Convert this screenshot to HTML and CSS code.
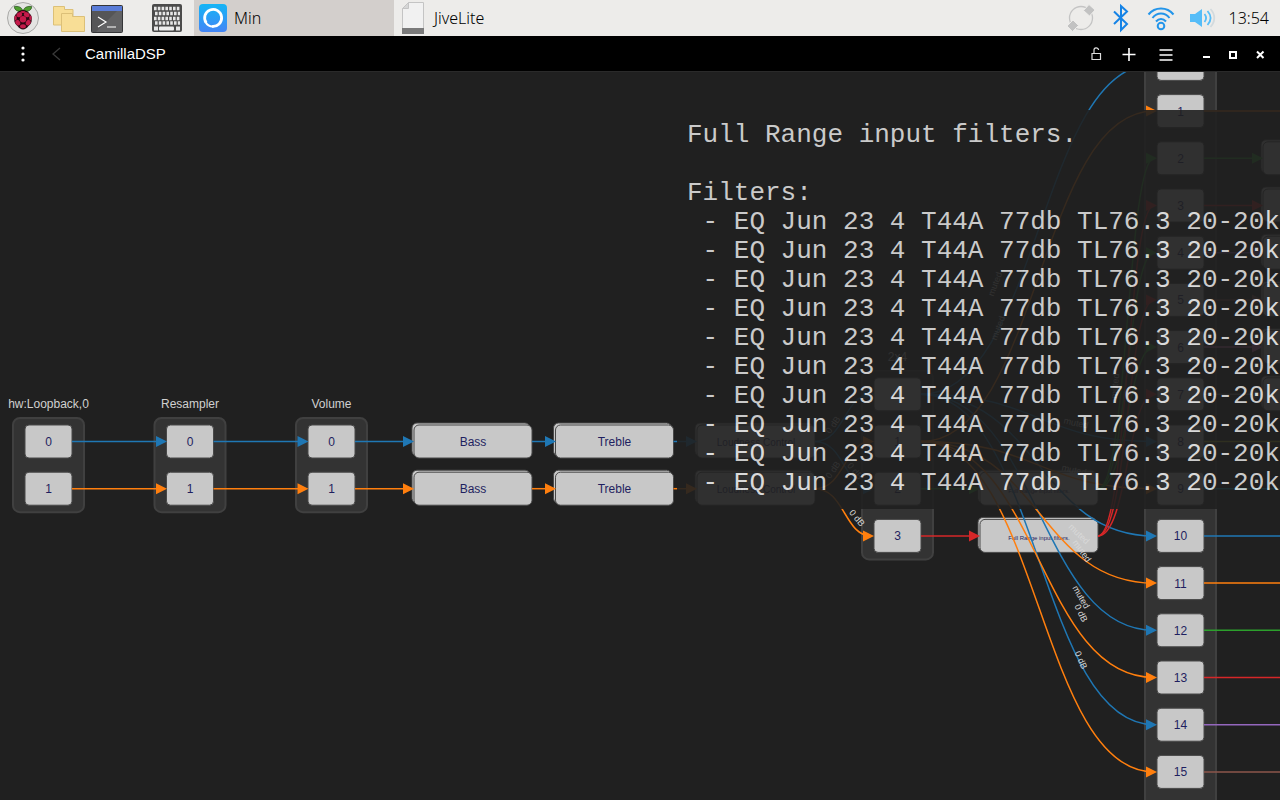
FILE: index.html
```html
<!DOCTYPE html>
<html lang="en">
<head>
<meta charset="utf-8">
<title>CamillaDSP</title>
<link rel="stylesheet" href="styles.css">
</head>
<body>
<header class="panel">
  <button class="launch launch-menu" aria-label="Menu">
    <svg width="34" height="34" viewBox="0 0 34 34">
      <circle cx="17" cy="17" r="15.5" fill="#e4e4e2" stroke="#a9a9a7"/>
      <path d="M16.5 10.5C12 11 8 9 8.500 5.500C12 5 16 6 16.800 10zM17.500 10.500C22 11 26 9 25.500 5.500C22 5 18 6 17.200 10z" fill="#4f9e2f" stroke="#24511a" stroke-width=".8"/>
      <path d="M17 9c3 0 5 1.500 6.500 3.500c2 1.500 2.500 4 2.200 6c.3 3-1.200 5-3.200 6.500c-1.500 2-3.500 3.500-5.500 3.500s-4-1.500-5.500-3.500c-2-1.500-3.500-3.500-3.200-6.500c-.3-2 .2-4.500 2.200-6C12 10.500 14 9 17 9z" fill="#2a0812"/>
      <g fill="#c51a4a"><circle cx="17" cy="18.300" r="3.200"/><ellipse cx="13.300" cy="13.700" rx="2.900" ry="2.300" transform="rotate(-30 13.300 13.700)"/><ellipse cx="20.700" cy="13.700" rx="2.900" ry="2.300" transform="rotate(30 20.700 13.700)"/><ellipse cx="11.800" cy="21.700" rx="2.300" ry="2.900" transform="rotate(-30 11.800 21.700)"/><ellipse cx="22.200" cy="21.700" rx="2.300" ry="2.900" transform="rotate(30 22.200 21.700)"/><ellipse cx="17" cy="25.300" rx="2.900" ry="2"/><ellipse cx="9.600" cy="17" rx="1.200" ry="2.400"/><ellipse cx="24.400" cy="17" rx="1.200" ry="2.400"/><ellipse cx="17" cy="10.900" rx="2.600" ry="1"/></g>
    </svg>
  </button>
  <button class="launch launch-files" aria-label="File Manager">
    <svg width="34" height="34" viewBox="0 0 34 34" fill="#f8de96" stroke="#dcc078">
      <path d="M2.500 5.500h11v3h8.500v15.500h-19.500z"/><path d="M10.500 12.500h11v3h12v15h-23z"/>
    </svg>
  </button>
  <button class="launch launch-terminal" aria-label="Terminal">
    <svg width="34" height="34" viewBox="0 0 34 34">
      <rect x="1.500" y="4.500" width="31" height="27" rx="1" fill="#555557" stroke="#353537"/>
      <path d="M32 10v-5L6 31h26z" fill="#68686a" opacity=".7"/><rect x="2" y="5" width="30" height="5" fill="#5a7cd8"/>
      <path d="M8 16l8 5l-8 5M17 26h9" fill="none" stroke="#fff" stroke-width="1.200"/>
    </svg>
  </button>
  <button class="launch launch-keyboard" aria-label="Keyboard">
    <svg width="32" height="32" viewBox="0 0 32 32">
      <rect x="1" y="2" width="30" height="28" rx="2" fill="#4b4b4b"/>
      <path d="M3 6.500h26M4 11.500h25M3 16.500h26M4 21h25" stroke="#e6e6e6" stroke-width="3.600" stroke-dasharray="2.600 1.200"/>
      <path d="M3 26.500h4M25 26.500h4" stroke="#e6e6e6" stroke-width="4"/>
      <rect x="8" y="24.500" width="15" height="4" rx="1" fill="#eee"/>
    </svg>
  </button>
  <button class="task task-active">
    <svg width="28" height="28" viewBox="0 0 28 28">
      <defs><linearGradient id="min-bg" x2="0" y2="1"><stop stop-color="#15b5f5"/><stop offset="1" stop-color="#4385f6"/></linearGradient></defs>
      <rect width="28" height="28" rx="4" fill="url(#min-bg)"/>
      <path d="M7.200 18.800A8.500 8.500 0 1 1 13 22.300" fill="none" stroke="#fff" stroke-width="2.800"/><path d="M6.500 18A8.500 8.500 0 0 0 14.500 22.500" fill="none" stroke="#fff" stroke-width="2"/>
    </svg>
    <span>Min</span>
  </button>
  <button class="task">
    <svg width="28" height="34" viewBox="0 0 28 34">
      <path d="M9.500 1.500H24.500V29H3.500V7.500z" fill="#f1f1f1" stroke="#c4c4c4"/><path d="M9.500 1.500v6h-6z" fill="#d6d6d6" stroke="#c4c4c4"/><rect x="3" y="27" width="22" height="6" fill="#7a7a7a"/>
    </svg>
    <span>JiveLite</span>
  </button>
  <div class="tray">
    <button aria-label="Updates">
      <svg width="28" height="32" viewBox="0 0 28 32"><circle cx="14" cy="16" r="11.500" fill="none" stroke="#c4c4c4" stroke-width="1.300"/><g fill="#c2c2c2" stroke="#edecea" stroke-width="1"><path d="M22 2.500l6 5.500-5.500 6-6-5.500zM6 18l5.500 5.500-6 6L0 24z"/></g></svg>
    </button>
    <button aria-label="Bluetooth">
      <svg width="26" height="32" viewBox="-3 0 26 32"><path d="M3 9.500l13 12.500-6 6V4l6 5.500L3 22" fill="none" stroke="#1583e6" stroke-width="2"/></svg>
    </button>
    <button aria-label="Wi-Fi">
      <svg width="28" height="32" viewBox="0 0 28 32" fill="none" stroke="#2395ea" stroke-width="2"><path d="M1.500 12.500C8 4.500 20 4.500 26.500 12.500M5.500 16C10 10 18 10 22.500 16M9 19.500c3-3.500 7-3.500 10 0"/><circle cx="14" cy="24" r="3.300"/></svg>
    </button>
    <button aria-label="Volume">
      <svg width="28" height="32" viewBox="0 0 28 32" fill="none" stroke-width="1.800"><path d="M2 12h5l7-5v18l-7-5H2z" fill="#56bdf8"/><path d="M16.500 12c2 2.500 2 5.500 0 8M19.500 9c4 4.500 4 9.500 0 14" stroke="#56bdf8"/><path d="M22.500 7c5 5.500 5 12.500 0 18" stroke="#d2dade"/></svg>
    </button>
    <time>13:54</time>
  </div>
</header>
<nav class="titlebar">
  <button aria-label="App menu"><svg width="16" height="20" viewBox="0 0 16 20" fill="#fff"><circle cx="8" cy="4" r="1.600"/><circle cx="8" cy="10" r="1.600"/><circle cx="8" cy="16" r="1.600"/></svg></button>
  <button class="back" aria-label="Back"><svg width="16" height="20" viewBox="0 0 16 20"><path d="M12 4L5 10l7 6" fill="none" stroke="#3a3a3a" stroke-width="1.300"/></svg></button>
  <h1>CamillaDSP</h1>
  <div class="tools">
    <button aria-label="Site information"><svg width="14" height="18" viewBox="0 0 14 18"><path d="M3 8.500h8.500v6H3zM5 8.500V5.500a2.300 2.300 0 0 1 4.600-.500" fill="none" stroke="#ddd" stroke-width="1.200"/></svg></button>
    <button class="add" aria-label="New tab"><svg width="16" height="18" viewBox="0 0 16 18"><path d="M8 3v13M1.500 9.500h13" stroke="#fff" stroke-width="1.600"/></svg></button>
    <button class="list" aria-label="Task list"><svg width="16" height="18" viewBox="0 0 16 18"><path d="M1.500 5h13M1.500 10h13M1.500 15h13" stroke="#fff" stroke-width="1.700"/></svg></button>
    <button class="win" aria-label="Minimize"><svg width="12" height="18" viewBox="0 0 12 18"><path d="M3 12h7" stroke="#fff" stroke-width="2"/></svg></button>
    <button class="win" aria-label="Maximize"><svg width="12" height="18" viewBox="0 0 12 18"><rect x="3" y="7" width="6" height="6" fill="none" stroke="#fff" stroke-width="2"/></svg></button>
    <button class="win" aria-label="Close"><svg width="12" height="18" viewBox="0 0 12 18"><path d="M3 6.500l6.500 6.500M9.500 6.500L3 13" stroke="#fff" stroke-width="2"/></svg></button>
  </div>
</nav>
<main class="canvas">
  <svg class="graph" role="img" aria-label="Pipeline"><g id="graph" transform="translate(0 -72)"></g></svg>
  <pre class="tooltip">Full Range input filters.

Filters:
 - EQ Jun 23 4 T44A 77db TL76.3 20-20k
 - EQ Jun 23 4 T44A 77db TL76.3 20-20k
 - EQ Jun 23 4 T44A 77db TL76.3 20-20k
 - EQ Jun 23 4 T44A 77db TL76.3 20-20k
 - EQ Jun 23 4 T44A 77db TL76.3 20-20k
 - EQ Jun 23 4 T44A 77db TL76.3 20-20k
 - EQ Jun 23 4 T44A 77db TL76.3 20-20k
 - EQ Jun 23 4 T44A 77db TL76.3 20-20k
 - EQ Jun 23 4 T44A 77db TL76.3 20-20k
 - EQ Jun 23 4 T44A 77db TL76.3 20-20k</pre>
</main>
<script src="graph.js"></script>
</body>
</html>
```
FILE: styles.css
```css
* { box-sizing: border-box; }
body {
  margin: 0;
  height: 100vh;
  display: flex;
  flex-direction: column;
  overflow: hidden;
  background: #202020;
  font-family: "Liberation Sans", sans-serif;
}
button {
  display: flex;
  align-items: center;
  flex: none;
  padding: 0;
  border: 0;
  background: none;
  color: inherit;
  font: inherit;
}
svg { display: block; flex: none; }

.panel {
  display: flex;
  align-items: center;
  flex: none;
  height: 36px;
  padding: 0 11px 0 6px;
  background: #edecea;
  color: #000;
  font: 300 16px "Noto Sans", "Open Sans", sans-serif;
}
.launch-files { margin-left: 11px; }
.launch-terminal { margin-left: 5px; }
.launch-keyboard { margin: 0 11px 0 27px; }
.task {
  flex: 0 1 200px;
  height: 36px;
  gap: 7px;
  padding: 0 5px;
}
.task-active { background: #d3cfcc; }
.tray {
  display: flex;
  align-items: center;
  gap: 13px;
  margin-left: auto;
}

.titlebar {
  display: flex;
  align-items: center;
  flex: none;
  height: 35px;
  padding: 0 14px 0 15px;
  background: #000;
  color: #fff;
}
.titlebar h1 {
  margin: 0 0 0 21px;
  font-size: 15px;
  font-weight: 400;
}
.back { margin-left: 17px; }
.tools {
  display: flex;
  align-items: center;
  margin-left: auto;
}
.add { margin-left: 18px; }
.list { margin: 0 11px 0 21px; }
.win { margin-left: 15px; }

.canvas {
  position: relative;
  flex: 1;
  overflow: hidden;
  border-top: 1px solid #2a2a2a;
}
.graph { width: 100%; height: 100%; }
.group { fill: #333; stroke: #404040; stroke-width: 2px; }
.node { fill: #c8c8c8; stroke: #484848; stroke-width: 1px; }
.title { fill: #d0d0d0; font-size: 12px; text-anchor: middle; }
.label { fill: #1f1f60; font-size: 12px; text-anchor: middle; }
.label-medium { font-size: 10px; }
.label-small { font-size: 6px; }
.gain { fill: #d8d8d8; font-size: 9px; text-anchor: middle; }
.link { fill: none; stroke-width: 1.5px; }

.tooltip {
  position: absolute;
  top: 38px;
  left: 677px;
  right: 0;
  margin: 0;
  padding: 11px 10px;
  background: #202020;
  color: #ddd;
  opacity: 0.9;
  font: 26px/29px "Liberation Mono", monospace;
}
```
FILE: graph.js
```js
const root = document.getElementById("graph");
const COLORS = ["#1f77b4", "#ff7f0e", "#2ca02c", "#d62728", "#9467bd", "#8c564b", "#e377c2", "#7f7f7f", "#bcbd22", "#17becf"];
const colX = c => 48.5 + c * 141.5;
const rowY = r => 441.5 + r * 47.2;

function add(tag, attrs, text) {
  const el = document.createElementNS("http://www.w3.org/2000/svg", tag);
  for (const key in attrs) el.setAttribute(key, attrs[key]);
  if (text !== undefined) el.textContent = text;
  root.appendChild(el);
}
function group(c, first, last, title) {
  const top = rowY(first) - 23.5;
  add("rect", { class: "group", x: colX(c) - 35.5, y: top, width: 71, height: rowY(last) + 23.5 - top, rx: 7 });
  if (title) add("text", { class: "title", x: colX(c), y: top - 10 }, title);
}
function channel(c, r, text) {
  add("rect", { class: "node", x: colX(c) - 23.5, y: rowY(r) - 16.5, width: 47, height: 33, rx: 4 });
  add("text", { class: "label", x: colX(c), y: rowY(r) + 4.5 }, text);
}
function filter(c, r, text, size) {
  const x = colX(c) - 59, y = rowY(r) - 16.5;
  add("rect", { class: "node", x: x - 2, y: y - 2, width: 118, height: 33, rx: 5 });
  add("rect", { class: "node", x, y, width: 118, height: 33, rx: 5 });
  add("text", { class: size ? "label label-" + size : "label", x: colX(c), y: rowY(r) + 4.5 }, text);
}
function link(x1, y1, x2, y2, color) {
  const mid = (x1 + x2) / 2;
  add("path", { class: "link", stroke: color, d: `M${x1} ${y1}C${mid} ${y1} ${mid} ${y2} ${x2 - 3} ${y2}` });
  add("path", { fill: color, d: `M${x2 - 11} ${y2 - 5.5}L${x2} ${y2}L${x2 - 11} ${y2 + 5.5}z` });
}
function gain(x, y, angle, text) {
  add("text", { class: "gain", transform: `translate(${x} ${y}) rotate(${angle})`, y: 3 }, text);
}

group(0, 0, 1, "hw:Loopback,0");
group(1, 0, 1, "Resampler");
group(2, 0, 1, "Volume");
group(6, -1, 2, "2x4");
group(8, -8, 8);

for (let r = 0; r < 2; r++) {
  for (let c = 0; c < 3; c++) channel(c, r, r);
  filter(3, r, "Bass");
  filter(4, r, "Treble");
  filter(5, r, "Loudness Control", "medium");
}
for (let i = 0; i < 4; i++) channel(6, i - 1, i);
add("rect", { class: "node", x: colX(8) - 23.5, y: rowY(-8) - 16.5, width: 47, height: 33, rx: 4 });
for (let i = 1; i < 16; i++) channel(8, i - 8, i);
for (let i = 2; i < 8; i++) filter(9, i - 8, "");
filter(7, 1, "Full Range input filters.", "small");
filter(7, 2, "Full Range input filters.", "small");

for (let r = 0; r < 2; r++) {
  const y = rowY(r);
  link(72, y, 167, y, COLORS[r]);
  link(213.5, y, 308.5, y, COLORS[r]);
  link(355, y, 414, y, COLORS[r]);
  link(532, y, 556, y, COLORS[r]);
  link(673.5, y, 697, y, COLORS[r]);
}
for (const [from, to] of [[0, -1], [0, 1], [1, 0], [1, 2]]) link(815, rowY(from), 874, rowY(to), COLORS[from]);
link(921, rowY(1), 980, rowY(1), COLORS[2]);
link(921, rowY(2), 980, rowY(2), COLORS[3]);
for (const to of [0, 8, 10, 12, 14]) link(921, rowY(-1), 1157, rowY(to - 8), COLORS[0]);
for (const to of [1, 9, 11, 13, 15]) link(921, rowY(0), 1157, rowY(to - 8), COLORS[1]);
for (const to of [2, 4, 6]) link(1098, rowY(1), 1157, rowY(to - 8), COLORS[2]);
for (const to of [3, 5, 7]) link(1098, rowY(2), 1157, rowY(to - 8), COLORS[3]);
for (let i = 0; i < 16; i++) {
  const y = rowY(i - 8), filtered = i >= 2 && i < 8;
  if (filtered) link(1204, y, 1263, y, COLORS[i]);
  else add("path", { class: "link", stroke: COLORS[i % 10], d: `M1204 ${y}H3000` });
}

gain(833, 425, -54, "0 dB");
gain(833, 470, -54, "0 dB");
gain(855, 471, 50, "0 dB");
gain(857, 518, 50, "0 dB");
gain(995, 284, -70, "muted");
gain(998, 328, -70, "muted");
gain(1115, 386, -85, "muted");
gain(1076, 423, 12, "muted");
gain(1074, 470, 12, "muted");
gain(1079, 534, 44, "muted");
gain(1082, 551, 55, "muted");
gain(1081, 597, 60, "muted");
gain(1081, 613, 65, "0 dB");
gain(1081, 660, 66, "0 dB");
```
